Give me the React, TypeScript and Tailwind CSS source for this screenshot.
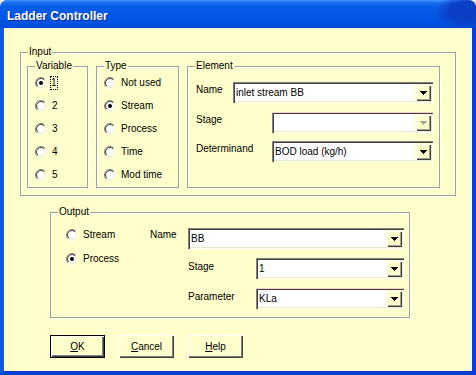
import React, { useId } from "react";

function Radio({ checked }: { checked?: boolean }) {
  const id = useId().replace(/:/g, "");
  return (
    <svg width="12" height="12" viewBox="0 0 12 12" className="shrink-0 block">
      <defs>
        <clipPath id={`tl${id}`}>
          <polygon points="0,0 12,0 0,12" />
        </clipPath>
        <clipPath id={`br${id}`}>
          <polygon points="12,0 12,12 0,12" />
        </clipPath>
      </defs>
      <circle cx="6" cy="6" r="4.5" fill="#ffffff" />
      <circle cx="6" cy="6" r="5.5" fill="none" stroke="#808080" clipPath={`url(#tl${id})`} />
      <circle cx="6" cy="6" r="5.5" fill="none" stroke="#ffffff" clipPath={`url(#br${id})`} />
      <circle cx="6" cy="6" r="4.5" fill="none" stroke="#404040" clipPath={`url(#tl${id})`} />
      <circle cx="6" cy="6" r="4.5" fill="none" stroke="#e8e8c0" clipPath={`url(#br${id})`} />
      {checked && <circle cx="6" cy="6" r="2" fill="#000000" />}
    </svg>
  );
}

function RadioRow({ label, checked, focus }: { label: string; checked?: boolean; focus?: boolean }) {
  return (
    <div className="flex items-center h-[12px]">
      <Radio checked={checked} />
      {focus ? (
        <span className="ml-[3px] border border-dotted border-black leading-[12px] -mt-[1px]">{label}</span>
      ) : (
        <span className="ml-[5px] leading-[12px] -mt-[1px]">{label}</span>
      )}
    </div>
  );
}

function Group({
  label,
  className,
  children,
}: {
  label: string;
  className: string;
  children?: React.ReactNode;
}) {
  return (
    <div
      className={`relative shrink-0 border border-[#a0a098] shadow-[inset_1px_1px_0_#ffffff,1px_1px_0_#ffffff] ${className}`}
    >
      <span className="absolute left-[7px] top-[-8px] bg-[#ffffcc] px-[1px] leading-[13px] whitespace-nowrap">
        {label}
      </span>
      {children}
    </div>
  );
}

function Arrow({ disabled }: { disabled?: boolean }) {
  const c = disabled ? "#a8a898" : "#000000";
  return (
    <svg width="7" height="4" viewBox="0 0 7 4" className="block">
      <rect x="0" y="0" width="7" height="1" fill={c} />
      <rect x="1" y="1" width="5" height="1" fill={c} />
      <rect x="2" y="2" width="3" height="1" fill={c} />
      <rect x="3" y="3" width="1" height="1" fill={c} />
    </svg>
  );
}

function Combo({
  className,
  text,
  disabled,
  pink,
}: {
  className: string;
  text?: string;
  disabled?: boolean;
  pink?: boolean;
}) {
  return (
    <div
      className={`shrink-0 h-[21px] bg-white p-[2px] flex ${
        pink
          ? "shadow-[inset_0_1px_0_#f2cfc8,inset_1px_1px_0_#808080,inset_2px_2px_0_#404040,inset_-1px_-1px_0_#ffffff,inset_-2px_-2px_0_#ece9c8]"
          : "shadow-[inset_1px_1px_0_#808080,inset_2px_2px_0_#404040,inset_-1px_-1px_0_#ffffff,inset_-2px_-2px_0_#ece9c8]"
      } ${className}`}
    >
      <div className="flex-1 flex items-center pl-[1px] leading-[12px] whitespace-nowrap overflow-hidden">{text}</div>
      <div className="w-[16px] h-[17px] bg-[#ffffcc] flex items-center justify-center shadow-[inset_1px_1px_0_#ffffcc,inset_2px_2px_0_#ffffff,inset_-1px_-1px_0_#404040,inset_-2px_-2px_0_#a0a090]">
        <Arrow disabled={disabled} />
      </div>
    </div>
  );
}

function Btn({ label, def }: { label: string; def?: boolean }) {
  const first = label.charAt(0);
  const rest = label.slice(1);
  return (
    <div
      className={`w-[55px] h-[23px] shrink-0 flex items-center justify-center bg-[#ffffcc] ${
        def
          ? "border border-black shadow-[inset_1px_1px_0_#ffffff,inset_-1px_-1px_0_#404040,inset_-2px_-2px_0_#808080]"
          : "shadow-[inset_1px_1px_0_#ffffff,inset_-1px_-1px_0_#404040,inset_-2px_-2px_0_#808080]"
      }`}
    >
      <span className="leading-[12px]">
        <span className="underline underline-offset-[1px]">{first}</span>
        {rest}
      </span>
    </div>
  );
}

export default function App() {
  return (
    <div className="w-[476px] h-[375px] bg-[#e8e8e8] [font-family:'Liberation_Sans',Arial,sans-serif] text-[10px] text-black">
      <div className="w-full h-full flex flex-col rounded-t-[8px] overflow-hidden bg-[#0a4fd8]">
        <div className="h-[28px] shrink-0 pl-[7px] pt-[9px] bg-[radial-gradient(ellipse_34px_18px_at_468px_12px,#0b3fc6_0%,#0b3fc6_55%,rgba(11,63,198,0)_100%),linear-gradient(180deg,#3f93ff_0%,#1a6ff0_10%,#0a5fe8_22%,#0458e6_50%,#0054e3_80%,#0049d8_100%)]">
          <div className="text-white font-bold text-[12px] leading-[14px] [text-shadow:1px_1px_0_#0a2a8c]">
            Ladder Controller
          </div>
        </div>
        <div className="flex-1 flex flex-col bg-[#ffffcc] border-l-4 border-r-4 border-b-4 border-l-[#0a5ae6] border-r-[#0a40cf] border-b-[#0a40cf] pl-[16px] pt-[24px]">
          {/* Input group */}
          <Group label="Input" className="w-[436px] h-[144px] flex items-start gap-[8px] pl-[6px] pt-[13px]">
            <Group label="Variable" className="w-[61px] h-[122px] flex flex-col gap-[11px] pl-[7px] pt-[10px]">
              <RadioRow label="1" checked focus />
              <RadioRow label="2" />
              <RadioRow label="3" />
              <RadioRow label="4" />
              <RadioRow label="5" />
            </Group>
            <Group label="Type" className="w-[83px] h-[122px] flex flex-col gap-[11px] pl-[7px] pt-[10px]">
              <RadioRow label="Not used" />
              <RadioRow label="Stream" checked />
              <RadioRow label="Process" />
              <RadioRow label="Time" />
              <RadioRow label="Mod time" />
            </Group>
            <Group label="Element" className="w-[253px] h-[122px] flex flex-col pl-[8px] pt-[15px]">
              <div className="flex items-start">
                <div className="w-[37px] pt-[2px] leading-[12px]">Name</div>
                <Combo className="w-[200px]" text="inlet stream BB" />
              </div>
              <div className="flex items-start mt-[9px]">
                <div className="w-[76px] pt-[2px] leading-[12px]">Stage</div>
                <Combo className="w-[161px]" disabled pink />
              </div>
              <div className="flex items-start mt-[8px]">
                <div className="w-[76px] pt-[2px] leading-[12px]">Determinand</div>
                <Combo className="w-[161px]" text="BOD load (kg/h)" />
              </div>
            </Group>
          </Group>

          {/* Output group */}
          <Group label="Output" className="ml-[30px] mt-[16px] w-[360px] h-[106px] flex items-start pl-[15px] pt-[15px]">
            <div className="w-[84px] flex flex-col gap-[12px] pt-[1px]">
              <RadioRow label="Stream" />
              <RadioRow label="Process" checked />
            </div>
            <div className="flex flex-col">
              <div className="flex items-start">
                <div className="w-[38px] pt-[1px] leading-[12px]">Name</div>
                <Combo className="w-[216px]" text="BB" />
              </div>
              <div className="flex items-start mt-[9px] ml-[38px]">
                <div className="w-[68px] pt-[3px] leading-[12px]">Stage</div>
                <Combo className="w-[148px]" text="1" />
              </div>
              <div className="flex items-start mt-[9px] ml-[38px]">
                <div className="w-[68px] pt-[3px] leading-[12px]">Parameter</div>
                <Combo className="w-[148px]" text="KLa" pink />
              </div>
            </div>
          </Group>

          {/* Buttons */}
          <div className="ml-[30px] mt-[17px] flex gap-[14px]">
            <Btn label="OK" def />
            <Btn label="Cancel" />
            <Btn label="Help" />
          </div>
        </div>
      </div>
    </div>
  );
}
